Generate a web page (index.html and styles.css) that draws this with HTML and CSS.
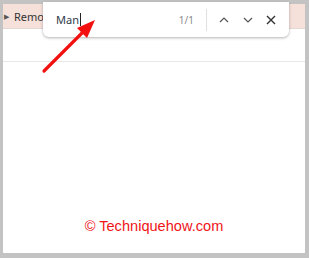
FILE: index.html
```html
<!DOCTYPE html>
<html lang="en">
<head>
    <meta charset="UTF-8">
    <title>Find bar</title>
    <link rel="stylesheet" href="styles.css">
</head>
<body>
    <div class="frame">
        <div class="toolbar">
            <span class="tri">&#9654;</span>
            <span class="toolbar-text">Remove</span>
        </div>
        <div class="spacer"></div>
        <div class="content">
            <p class="credit">&copy; Techniquehow.com</p>
        </div>

        <div class="findbar">
            <div class="query">Man<span class="caret"></span></div>
            <span class="count">1/1</span>
            <span class="sep"></span>
            <svg class="btn btn-up" width="12" height="12" viewBox="0 0 12 12">
                <path d="M2 8 L6 4 L10 8" fill="none" stroke="#555" stroke-width="1.2"/>
            </svg>
            <svg class="btn btn-down" width="12" height="12" viewBox="0 0 12 12">
                <path d="M2 4 L6 8 L10 4" fill="none" stroke="#555" stroke-width="1.2"/>
            </svg>
            <svg class="btn btn-close" width="12" height="12" viewBox="0 0 12 12">
                <path d="M2 2 L10 10 M10 2 L2 10" fill="none" stroke="#333" stroke-width="1.4"/>
            </svg>
        </div>

        <svg class="arrow" width="70" height="70" viewBox="0 0 70 70">
            <line x1="3" y1="62" x2="44" y2="21" stroke="#f21010" stroke-width="3.2" stroke-linecap="round"/>
            <polygon points="54,11 36,19 46,29" fill="#f21010"/>
        </svg>
    </div>
</body>
</html>
```

FILE: styles.css
```css
body {
    margin: 0;
    background-color: #c3c3c3;
    font-family: "Segoe UI", "Noto Sans", "Open Sans", sans-serif;
}
.frame {
    position: relative;
    margin: 4px 4px 0 3px;
    height: 249px;
    background-color: #fff;
    display: flex;
    flex-direction: column;
}
.toolbar {
    height: 24px;
    background-color: #f5e0da;
    border-bottom: 1px solid #e3d6d3;
    display: flex;
    align-items: center;
    font-size: 11px;
    color: #333;
}
.tri {
    font-size: 7px;
    color: #555;
    margin: 0 5px 0 1px;
}
.spacer {
    height: 32px;
    border-bottom: 1px solid #e8e8e8;
}
.content {
    flex: 1;
    display: flex;
    align-items: flex-end;
    justify-content: center;
}
.credit {
    margin: 0 0 19px 0;
    font-family: "Liberation Sans", Arial, sans-serif;
    font-size: 14.6px;
    color: #f01418;
}
.findbar {
    position: absolute;
    top: -2px;
    left: 40px;
    width: 246px;
    height: 35px;
    background-color: #fff;
    border-radius: 0 0 6px 6px;
    box-shadow: 0 1px 3px rgba(0, 0, 0, 0.3);
    display: flex;
    align-items: center;
    box-sizing: border-box;
    padding: 0 12px 0 13px;
}
.query {
    flex: 1;
    font-size: 11px;
    color: #2f3a4a;
    display: flex;
    align-items: center;
}
.caret {
    display: inline-block;
    width: 1px;
    height: 13px;
    background-color: #222;
    margin-left: 1px;
}
.count {
    font-size: 10px;
    color: #8a8a8a;
    margin-right: 12px;
}
.sep {
    width: 1px;
    height: 22px;
    background-color: #e0e0e0;
    margin-right: 11px;
}
.btn-down {
    margin-left: 12px;
}
.btn-close {
    margin-left: 11px;
}
.arrow {
    position: absolute;
    left: 38px;
    top: 5px;
}
```
